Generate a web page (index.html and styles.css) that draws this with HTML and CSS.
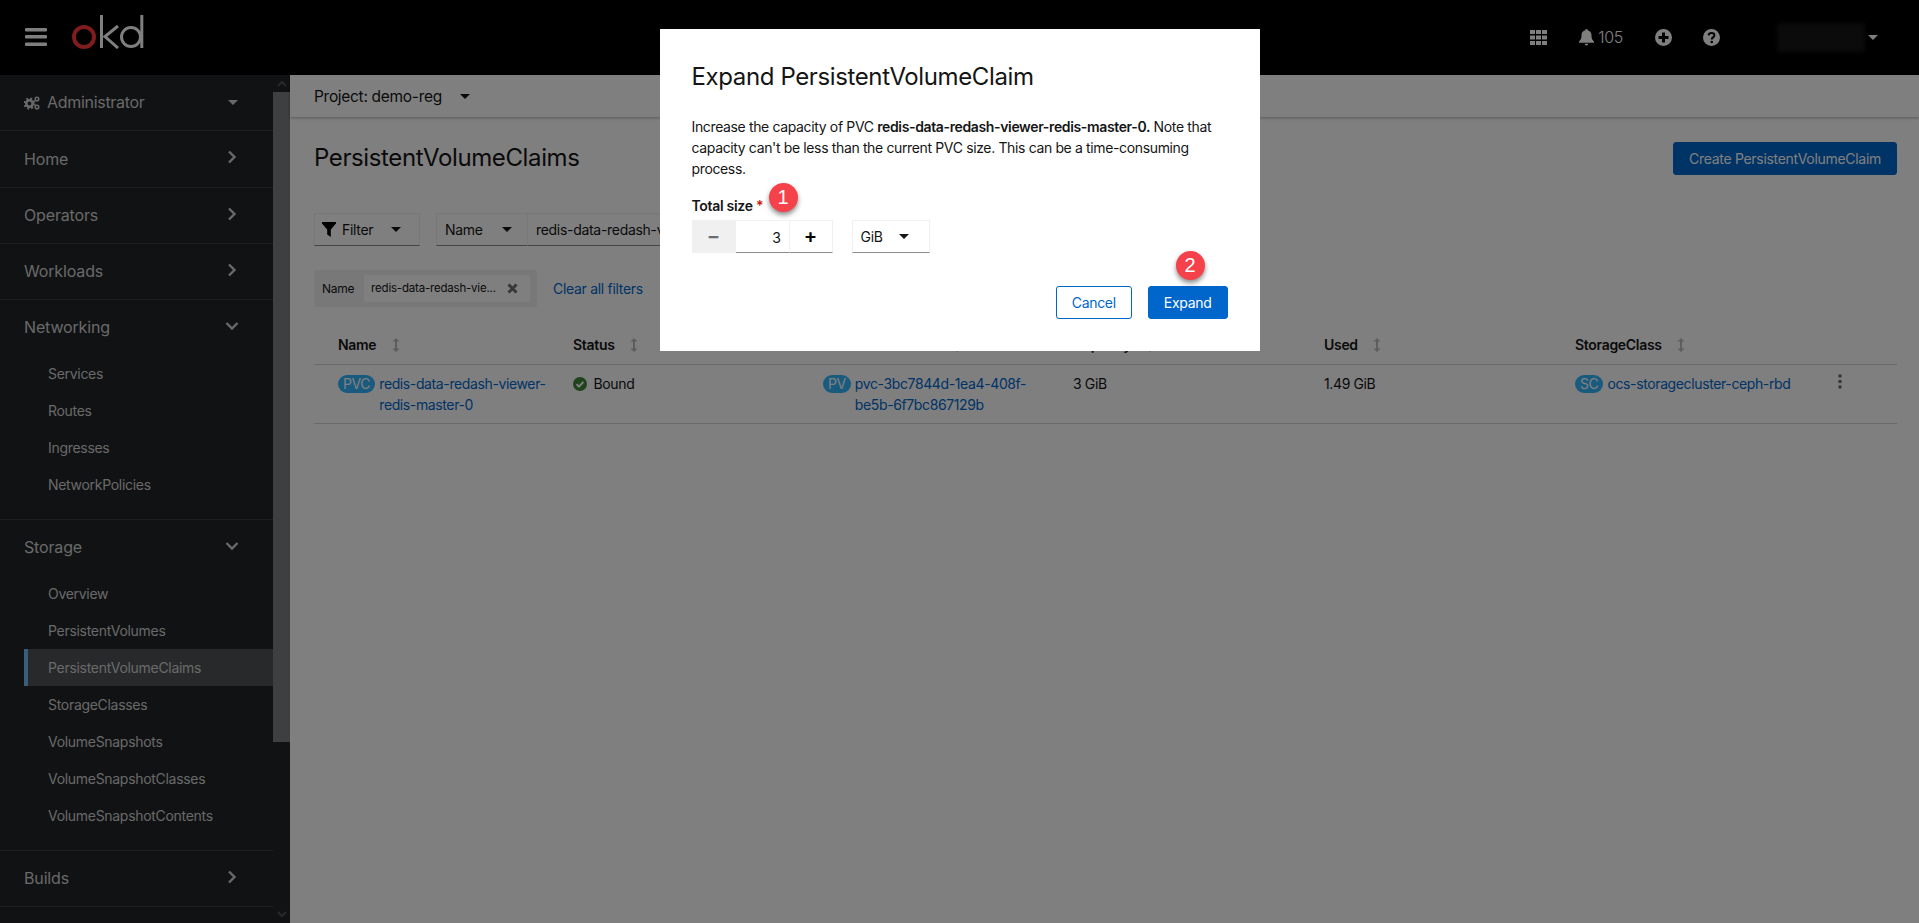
FILE: index.html
```html
<!DOCTYPE html>
<html lang="en">
<head>
    <meta charset="UTF-8">
    <meta name="viewport" content="width=device-width, initial-scale=1.0">
    <title>PersistentVolumeClaims</title>
    <link rel="stylesheet" href="styles.css">
</head>
<body>
    <header class="topbar">
        <svg class="menu-icon" width="22" height="20" viewBox="0 0 22 20"><rect y="1" width="22" height="3.4" rx="1"/><rect y="8" width="22" height="3.4" rx="1"/><rect y="15.6" width="22" height="3.4" rx="1"/></svg>
        <svg class="logo" width="72" height="34" viewBox="0 0 72 34" role="img" aria-label="okd">
            <circle cx="12" cy="22" r="10" fill="none" stroke="#ff3a3a" stroke-width="4"/>
            <g fill="none" stroke="#fff" stroke-width="3">
                <line x1="29.5" y1="0" x2="29.5" y2="33"/>
                <polyline points="46,11 33,21.5 46,33"/>
                <circle cx="59" cy="22" r="9.5"/>
                <line x1="69.8" y1="0" x2="69.8" y2="33"/>
            </g>
        </svg>
        <div class="topbar-tools">
            <svg class="tool-icon" width="17" height="15" viewBox="0 0 17 15"><path d="M0 0h5v4H0zM6 0h5v4H6zM12 0h5v4h-5zM0 5.500h5v4H0zM6 5.500h5v4H6zM12 5.500h5v4h-5zM0 11h5v4H0zM6 11h5v4H6zM12 11h5v4h-5z"/></svg>
            <span class="bell">
                <svg class="tool-icon" width="15" height="17" viewBox="0 0 15 17"><path d="M7.500 0a1.200 1.200 0 0 1 1.200 1.300c2.500.5 3.800 2.500 3.800 5 0 3.700 1 4.700 2.500 6.200v1.300H0v-1.300c1.500-1.500 2.500-2.500 2.500-6.200 0-2.500 1.300-4.500 3.800-5A1.200 1.200 0 0 1 7.500 0zM5.700 14.800h3.600a1.800 1.800 0 0 1-3.600 0z"/></svg>
                105
            </span>
            <svg class="tool-icon" width="17" height="17" viewBox="0 0 17 17"><path fill-rule="evenodd" d="M8.500 0a8.500 8.500 0 1 1 0 17a8.500 8.500 0 0 1 0-17zM7 3.500v3.500H3.500v3H7v3.500h3V10h3.500V7H10V3.500z"/></svg>
            <svg class="tool-icon help-icon" width="17" height="17" viewBox="0 0 17 17"><circle cx="8.500" cy="8.500" r="8.500"/><path d="M5.600 6.400c.2-1.500 1.400-2.300 2.900-2.300s2.900.9 2.900 2.300c0 2-2.700 2-2.700 4" fill="none" stroke="#000" stroke-width="2"/><circle cx="8.700" cy="13" r="1.300" fill="#000"/></svg>
            <div class="user-menu">
                <div class="user-blur"></div>
                <span class="caret caret-light"></span>
            </div>
        </div>
    </header>

    <div class="layout">
        <nav class="sidebar">
            <div class="sidebar-nav">
                <div class="perspective">
                    <svg class="cogs" width="16" height="14" viewBox="0 0 16 14">
                        <circle cx="5.500" cy="7.500" r="3.200" fill="none" stroke="#d2d2d2" stroke-width="2.600"/>
                        <circle cx="5.500" cy="7.500" r="5" fill="none" stroke="#d2d2d2" stroke-width="2" stroke-dasharray="2 1.930"/>
                        <circle cx="13" cy="3" r="1.800" fill="none" stroke="#d2d2d2" stroke-width="1.500"/>
                        <circle cx="13" cy="11" r="1.800" fill="none" stroke="#d2d2d2" stroke-width="1.500"/>
                    </svg>
                    <span>Administrator</span>
                    <span class="caret caret-nav"></span>
                </div>

                <div class="nav-group">
                    <div class="nav-head nav-head-first">Home <svg class="chev" width="10" height="14" viewBox="0 0 10 14"><polyline points="2,1.500 7.500,7 2,12.500"/></svg></div>
                </div>
                <div class="nav-group">
                    <div class="nav-head">Operators <svg class="chev" width="10" height="14" viewBox="0 0 10 14"><polyline points="2,1.500 7.500,7 2,12.500"/></svg></div>
                </div>
                <div class="nav-group">
                    <div class="nav-head">Workloads <svg class="chev" width="10" height="14" viewBox="0 0 10 14"><polyline points="2,1.500 7.500,7 2,12.500"/></svg></div>
                </div>
                <div class="nav-group">
                    <div class="nav-head">Networking <svg class="chev chev-down" width="14" height="10" viewBox="0 0 14 10"><polyline points="1.500,2 7,7.500 12.500,2"/></svg></div>
                    <ul class="nav-sub">
                        <li>Services</li>
                        <li>Routes</li>
                        <li>Ingresses</li>
                        <li>NetworkPolicies</li>
                    </ul>
                </div>
                <div class="nav-group">
                    <div class="nav-head">Storage <svg class="chev chev-down" width="14" height="10" viewBox="0 0 14 10"><polyline points="1.500,2 7,7.500 12.500,2"/></svg></div>
                    <ul class="nav-sub">
                        <li>Overview</li>
                        <li>PersistentVolumes</li>
                        <li class="active">PersistentVolumeClaims</li>
                        <li>StorageClasses</li>
                        <li>VolumeSnapshots</li>
                        <li>VolumeSnapshotClasses</li>
                        <li>VolumeSnapshotContents</li>
                    </ul>
                </div>
                <div class="nav-group">
                    <div class="nav-head">Builds <svg class="chev" width="10" height="14" viewBox="0 0 10 14"><polyline points="2,1.500 7.500,7 2,12.500"/></svg></div>
                </div>
            </div>
            <div class="scrollbar">
                <svg class="scroll-arrow" width="12" height="17" viewBox="0 0 12 17"><polyline points="2,11 6,7 10,11"/></svg>
                <div class="scroll-thumb"></div>
                <svg class="scroll-arrow scroll-arrow-end" width="12" height="17" viewBox="0 0 12 17"><polyline points="2,6 6,10 10,6"/></svg>
            </div>
        </nav>

        <main class="content">
            <div class="project-bar">Project: demo-reg <span class="caret caret-dark"></span></div>

            <div class="page-head">
                <h1>PersistentVolumeClaims</h1>
                <button class="btn btn-primary">Create PersistentVolumeClaim</button>
            </div>

            <div class="toolbar">
                <div class="select filter-select">
                    <svg width="14" height="15" viewBox="0 0 14 15"><path d="M0 0h14v1.500L8.800 7.500V15L5.200 12.500V7.500L0 1.500z"/></svg>
                    Filter <span class="caret caret-dark"></span>
                </div>
                <div class="select name-select">Name <span class="caret caret-dark"></span></div>
                <div class="select search-input">redis-data-redash-viewer-redis-master-0</div>
            </div>

            <div class="chips">
                <div class="chip-group">
                    <span class="chip-label">Name</span>
                    <span class="chip">redis-data-redash-vie...
                        <svg width="11" height="11" viewBox="0 0 11 11"><path d="M1.500 1.500l8 8M9.500 1.500l-8 8" fill="none" stroke="#6a6e73" stroke-width="3"/></svg>
                    </span>
                </div>
                <a class="clear-link">Clear all filters</a>
            </div>

            <table class="pvc-table">
                <colgroup>
                    <col class="col-name"><col class="col-status"><col class="col-pv"><col class="col-capacity"><col class="col-used"><col class="col-class"><col class="col-menu">
                </colgroup>
                <thead>
                    <tr>
                        <th>Name <svg class="sort" width="8" height="14" viewBox="0 0 8 14"><path d="M4 0l3.500 3.500H5v7h2.500L4 14 .5 10.500H3v-7H.5z"/></svg></th>
                        <th>Status <svg class="sort" width="8" height="14" viewBox="0 0 8 14"><path d="M4 0l3.500 3.500H5v7h2.500L4 14 .5 10.500H3v-7H.5z"/></svg></th>
                        <th>PersistentVolume <svg class="sort" width="8" height="14" viewBox="0 0 8 14"><path d="M4 0l3.500 3.500H5v7h2.500L4 14 .5 10.500H3v-7H.5z"/></svg></th>
                        <th>Capacity <svg class="sort" width="8" height="14" viewBox="0 0 8 14"><path d="M4 0l3.500 3.500H5v7h2.500L4 14 .5 10.500H3v-7H.5z"/></svg></th>
                        <th>Used <svg class="sort" width="8" height="14" viewBox="0 0 8 14"><path d="M4 0l3.500 3.500H5v7h2.500L4 14 .5 10.500H3v-7H.5z"/></svg></th>
                        <th>StorageClass <svg class="sort" width="8" height="14" viewBox="0 0 8 14"><path d="M4 0l3.500 3.500H5v7h2.500L4 14 .5 10.500H3v-7H.5z"/></svg></th>
                        <th></th>
                    </tr>
                </thead>
                <tbody>
                    <tr>
                        <td><div class="res-link"><span class="res-badge">PVC</span><a>redis-data-redash-viewer-<br>redis-master-0</a></div></td>
                        <td>
                            <svg class="status-ok" width="14" height="14" viewBox="0 0 14 14"><circle cx="7" cy="7" r="7" fill="#3e8635"/><polyline points="3.600,7.200 6,9.600 10.400,4.900" fill="none" stroke="#fff" stroke-width="2"/></svg>
                            Bound
                        </td>
                        <td><div class="res-link"><span class="res-badge">PV</span><a>pvc-3bc7844d-1ea4-408f-<br>be5b-6f7bc867129b</a></div></td>
                        <td>3 GiB</td>
                        <td>1.49 GiB</td>
                        <td><div class="res-link"><span class="res-badge">SC</span><a>ocs-storagecluster-ceph-rbd</a></div></td>
                        <td class="menu-cell"><svg width="4" height="15" viewBox="0 0 4 15"><circle cx="2" cy="2" r="1.800"/><circle cx="2" cy="7.500" r="1.800"/><circle cx="2" cy="13" r="1.800"/></svg></td>
                    </tr>
                </tbody>
            </table>
        </main>
    </div>

    <div class="backdrop">
        <div class="modal">
            <h2>Expand PersistentVolumeClaim</h2>
            <p>Increase the capacity of PVC <strong>redis-data-redash-viewer-redis-master-0.</strong> Note that capacity can't be less than the current PVC size. This can be a time-consuming process.</p>
            <label class="field-label">Total size <span class="required">*</span></label>
            <div class="size-row">
                <div class="stepper">
                    <button class="step step-minus">&minus;</button>
                    <div class="step-value">3</div>
                    <button class="step step-plus">+</button>
                </div>
                <div class="unit-select">GiB <span class="caret caret-dark"></span></div>
            </div>
            <div class="modal-actions">
                <button class="btn btn-secondary">Cancel</button>
                <button class="btn btn-primary">Expand</button>
            </div>
            <span class="marker marker-one">1</span>
            <span class="marker marker-two">2</span>
        </div>
    </div>
</body>
</html>
```

FILE: styles.css
```css
* {
    box-sizing: border-box;
}
html, body {
    height: 100%;
}
body {
    margin: 0;
    height: 923px;
    overflow: hidden;
    font-family: Inter, "Noto Sans", sans-serif;
    font-size: 14px;
    line-height: 21px;
    letter-spacing: -.3px;
    color: #151515;
    background-color: #fff;
    display: flex;
    flex-direction: column;
}

/* top bar */
.topbar {
    height: 75px;
    flex: none;
    background-color: #000;
    display: flex;
    align-items: flex-start;
    padding-left: 25px;
}
.menu-icon {
    fill: #fff;
    margin-top: 27px;
}
.logo {
    margin: 15px 0 0 25px;
}
.topbar-tools {
    margin-left: auto;
    display: flex;
    align-items: center;
    height: 74px;
    color: #fff;
    padding-right: 41px;
}
.tool-icon {
    fill: #fff;
    display: block;
}
.bell {
    display: flex;
    align-items: center;
    gap: 4px;
    margin: 0 32px;
    font-size: 16px;
    font-weight: 300;
}
.help-icon {
    margin-left: 31px;
}
.user-menu {
    display: flex;
    align-items: center;
    margin-left: 57px;
}
.user-blur {
    width: 88px;
    height: 29px;
    background-color: #161616;
    filter: blur(2px);
    margin-right: 3px;
}

/* little triangles used on every dropdown */
.caret {
    display: inline-block;
    width: 0;
    height: 0;
    border-left: 5px solid transparent;
    border-right: 5px solid transparent;
    border-top: 5px solid #151515;
}
.caret-light {
    border-top-color: #fff;
}
.caret-nav {
    border-top-color: #d2d2d2;
    margin-left: auto;
}

/* sidebar */
.layout {
    flex: 1;
    display: flex;
    min-height: 0;
}
.sidebar {
    width: 290px;
    flex: none;
    display: flex;
    background-color: #212427;
    color: #d2d2d2;
}
.sidebar-nav {
    width: 273px;
}
.perspective {
    height: 56px;
    display: flex;
    align-items: center;
    gap: 7px;
    padding: 0 35px 0 24px;
    border-bottom: 1px solid #3c3f42;
    font-size: 16px;
}
.nav-group {
    border-bottom: 1px solid #3c3f42;
}
.nav-head {
    height: 55px;
    display: flex;
    align-items: center;
    justify-content: space-between;
    padding: 0 36px 0 24px;
    font-size: 16px;
    letter-spacing: -.15px;
}
.nav-head-first {
    height: 56px;
}
.chev {
    fill: none;
    stroke: #d2d2d2;
    stroke-width: 2.4;
    margin-top: -4px;
}
.chev-down {
    margin-right: -2px;
}
.nav-sub {
    list-style: none;
    margin: 0;
    padding: 0 0 16px 24px;
}
.nav-sub li {
    height: 37px;
    line-height: 37px;
    padding-left: 24px;
}
.nav-sub .active {
    background-color: #4f5255;
    border-left: 4px solid #73bcf7;
    padding-left: 20px;
}
.scrollbar {
    width: 17px;
    display: flex;
    flex-direction: column;
}
.scroll-arrow {
    flex: none;
    fill: none;
    stroke: #4f5255;
    stroke-width: 2;
    margin: 0 auto;
}
.scroll-thumb {
    height: 650px;
    width: 100%;
    background-color: #7c7e81;
}
.scroll-arrow-end {
    margin-top: auto;
    margin-bottom: 0;
}

/* main content */
.content {
    flex: 1;
    min-width: 0;
}
.project-bar {
    height: 42px;
    padding-left: 24px;
    display: flex;
    align-items: center;
    gap: 18px;
    font-size: 15.500px;
    letter-spacing: -.3px;
    box-shadow: 0 1px 3px rgba(0, 0, 0, .3);
}
.page-head {
    display: flex;
    align-items: flex-start;
    justify-content: space-between;
    padding: 25px 22px 0 24px;
    height: 96px;
}
.page-head h1 {
    margin: -1px 0 0;
    font-size: 24px;
    font-weight: 400;
    line-height: 33px;
    letter-spacing: -.38px;
}
.btn {
    height: 33px;
    padding: 0 15px;
    border-radius: 3px;
    font: inherit;
    letter-spacing: inherit;
    cursor: pointer;
}
.btn-primary {
    background-color: #06c;
    border: 1px solid #06c;
    color: #fff;
}
.btn-secondary {
    background-color: #fff;
    border: 1px solid #06c;
    color: #06c;
}
.toolbar {
    display: flex;
    padding-left: 24px;
}
.select {
    height: 33px;
    display: flex;
    align-items: center;
    border: 1px solid #f0f0f0;
    border-bottom-color: #8a8d90;
}
.filter-select {
    width: 106px;
    padding-left: 7px;
    gap: 6px;
    margin-right: 16px;
}
.filter-select .caret {
    margin-left: 12px;
}
.name-select {
    width: 92px;
    padding-left: 8px;
    gap: 19px;
}
.search-input {
    width: 300px;
    padding-left: 8px;
    border-left: 0;
    white-space: nowrap;
    overflow: hidden;
}
.chips {
    display: flex;
    align-items: center;
    gap: 16px;
    padding: 24px 0 0 24px;
}
.chip-group {
    height: 37px;
    width: 223px;
    display: flex;
    align-items: center;
    background-color: #f0f0f0;
    border-radius: 3px;
    padding-left: 8px;
    font-size: 12px;
    gap: 10px;
}
.chip {
    width: 166px;
    height: 27px;
    background-color: #fff;
    border-radius: 3px;
    display: flex;
    align-items: center;
    justify-content: space-between;
    padding: 0 12px 0 7px;
    font-size: 11.500px;
    letter-spacing: -.2px;
}
.clear-link, .res-link a {
    color: #06c;
}
.pvc-table {
    width: 1583px;
    margin: 19px 0 0 24px;
    border-collapse: collapse;
    table-layout: fixed;
}
.col-name { width: 235px; }
.col-status { width: 250px; }
.col-pv { width: 250px; }
.col-capacity { width: 251px; }
.col-used { width: 251px; }
.col-class { width: 256px; }
.pvc-table th {
    text-align: left;
    font-weight: 600;
    height: 38px;
    padding: 0 0 0 24px;
    border-bottom: 1px solid #d2d2d2;
    font-size: 14px;
}
.pvc-table td {
    vertical-align: top;
    padding: 8px 0 8px 24px;
    border-bottom: 1px solid #d2d2d2;
    letter-spacing: -.38px;
}
.sort {
    fill: #b8bbbe;
    margin-left: 12px;
    vertical-align: -2px;
}
.res-link {
    display: flex;
    align-items: flex-start;
    gap: 4px;
}
.res-badge {
    flex: none;
    height: 18px;
    margin-top: 2px;
    padding: 0 5px;
    border-radius: 9px;
    background-color: #33b5ff;
    color: #fff;
    line-height: 18px;
}
.status-ok {
    vertical-align: -2px;
    margin-right: 3px;
}
.pvc-table .menu-cell {
    padding-left: 31px;
    fill: #6a6e73;
}

/* modal */
.backdrop {
    position: fixed;
    inset: 0;
    background-color: rgba(0, 0, 0, .5);
    display: flex;
    justify-content: center;
    align-items: flex-start;
    padding-top: 29px;
}
.modal {
    position: relative;
    width: 600px;
    height: 322px;
    background-color: #fff;
    padding: 31px 32px 0;
}
.modal h2 {
    margin: 0;
    font-size: 24px;
    font-weight: 400;
    line-height: 34px;
    letter-spacing: -.38px;
}
.modal p {
    margin: 22px 0 0;
    letter-spacing: -.36px;
}
.modal strong {
    font-weight: 600;
}
.field-label {
    display: block;
    margin-top: 16px;
    font-weight: 600;
}
.required {
    color: #c9190b;
}
.size-row {
    display: flex;
    gap: 19px;
    margin-top: 4px;
}
.stepper {
    display: flex;
    height: 33px;
}
.step {
    border: 0;
    padding: 0;
    font: inherit;
    font-size: 20px;
    font-weight: 600;
    background-color: transparent;
}
.step-minus {
    width: 44px;
    background-color: #f0f0f0;
    color: #6a6e73;
}
.step-value {
    width: 53px;
    text-align: right;
    line-height: 33px;
    padding-right: 8px;
    border-top: 1px solid #f0f0f0;
    border-bottom: 1px solid #8a8d90;
}
.step-plus {
    width: 44px;
    border: 1px solid #f0f0f0;
    border-bottom-color: #8a8d90;
}
.unit-select {
    width: 78px;
    height: 33px;
    display: flex;
    align-items: center;
    gap: 16px;
    padding-left: 8px;
    border: 1px solid #f0f0f0;
    border-bottom-color: #8a8d90;
}
.modal-actions {
    display: flex;
    justify-content: flex-end;
    gap: 16px;
    margin-top: 33px;
}
.modal-actions .btn {
    padding: 0 15px;
}
.marker {
    position: absolute;
    width: 29px;
    height: 29px;
    border-radius: 50%;
    background-color: #f5414a;
    color: #fff;
    font-family: "Liberation Sans", sans-serif;
    font-size: 20px;
    line-height: 29px;
    text-align: center;
    box-shadow: 0 3px 5px rgba(0, 0, 0, .45);
}
.marker-one {
    left: 109px;
    top: 154px;
}
.marker-two {
    left: 516px;
    top: 222px;
}
```
